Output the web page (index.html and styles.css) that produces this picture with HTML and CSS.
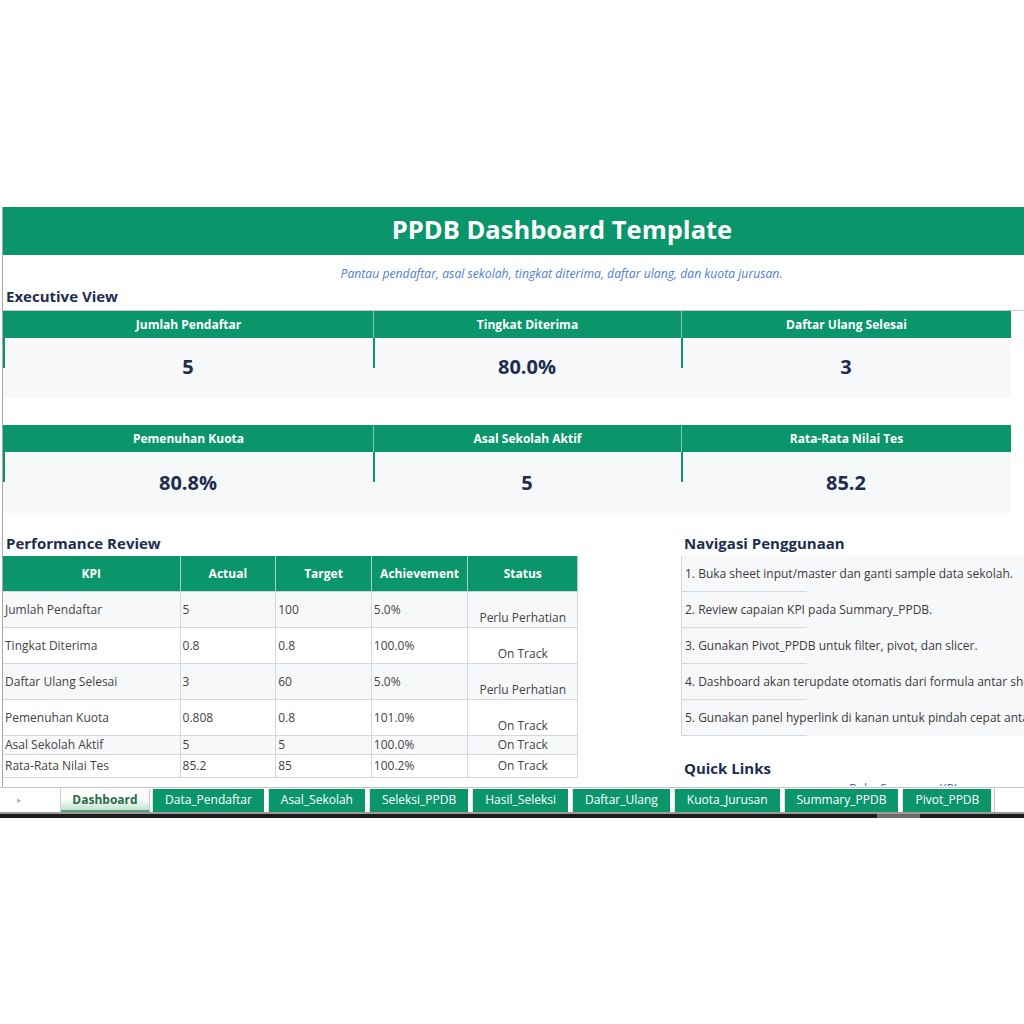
FILE: index.html
```html
<!DOCTYPE html>
<html lang="id">
<head>
    <meta charset="UTF-8">
    <title>PPDB Dashboard Template</title>
    <link rel="stylesheet" href="styles.css">
</head>
<body>

<div class="blank-top"></div>

<!-- Lembar Dashboard -->
<div class="sheet">
    <div class="banner">PPDB Dashboard Template</div>
    <div class="subtitle">Pantau pendaftar, asal sekolah, tingkat diterima, daftar ulang, dan kuota jurusan.</div>
    <div class="section-title exec">Executive View</div>

    <div class="kpi-grid">
        <div class="card"><div class="card-head">Jumlah Pendaftar</div><div class="card-value">5</div></div>
        <div class="card"><div class="card-head">Tingkat Diterima</div><div class="card-value">80.0%</div></div>
        <div class="card"><div class="card-head">Daftar Ulang Selesai</div><div class="card-value">3</div></div>
        <div class="card"><div class="card-head">Pemenuhan Kuota</div><div class="card-value">80.8%</div></div>
        <div class="card"><div class="card-head">Asal Sekolah Aktif</div><div class="card-value">5</div></div>
        <div class="card"><div class="card-head">Rata-Rata Nilai Tes</div><div class="card-value">85.2</div></div>
    </div>

    <div class="lower">
        <div class="col-left">
            <div class="section-title">Performance Review</div>
            <table class="perf">
                <thead>
                    <tr>
                        <th class="c-kpi">KPI</th>
                        <th class="c-num">Actual</th>
                        <th class="c-num">Target</th>
                        <th class="c-num">Achievement</th>
                        <th class="c-status">Status</th>
                    </tr>
                </thead>
                <tbody>
                    <tr class="tall"><td>Jumlah Pendaftar</td><td>5</td><td>100</td><td>5.0%</td><td class="status">Perlu Perhatian</td></tr>
                    <tr class="tall"><td>Tingkat Diterima</td><td>0.8</td><td>0.8</td><td>100.0%</td><td class="status">On Track</td></tr>
                    <tr class="tall"><td>Daftar Ulang Selesai</td><td>3</td><td>60</td><td>5.0%</td><td class="status">Perlu Perhatian</td></tr>
                    <tr class="tall"><td>Pemenuhan Kuota</td><td>0.808</td><td>0.8</td><td>101.0%</td><td class="status">On Track</td></tr>
                    <tr class="short"><td>Asal Sekolah Aktif</td><td>5</td><td>5</td><td>100.0%</td><td class="status">On Track</td></tr>
                    <tr class="short last"><td>Rata-Rata Nilai Tes</td><td>85.2</td><td>85</td><td>100.2%</td><td class="status">On Track</td></tr>
                </tbody>
            </table>
        </div>

        <div class="col-right">
            <div class="section-title">Navigasi Penggunaan</div>
            <ul class="nav-list">
                <li>1. Buka sheet input/master dan ganti sample data sekolah.</li>
                <li>2. Review capaian KPI pada Summary_PPDB.</li>
                <li>3. Gunakan Pivot_PPDB untuk filter, pivot, dan slicer.</li>
                <li>4. Dashboard akan terupdate otomatis dari formula antar sheet.</li>
                <li>5. Gunakan panel hyperlink di kanan untuk pindah cepat antar sheet.</li>
            </ul>
            <div class="section-title quick">Quick Links</div>
            <div class="quick-link">Buka Summary_KPI</div>
        </div>
    </div>
</div>

<!-- Tab sheet -->
<div class="tabbar">
    <div class="tab-nav">&#9656;</div>
    <div class="tab active">Dashboard</div>
    <div class="tab">Data_Pendaftar</div>
    <div class="tab">Asal_Sekolah</div>
    <div class="tab">Seleksi_PPDB</div>
    <div class="tab">Hasil_Seleksi</div>
    <div class="tab">Daftar_Ulang</div>
    <div class="tab">Kuota_Jurusan</div>
    <div class="tab">Summary_PPDB</div>
    <div class="tab">Pivot_PPDB</div>
    <div class="tab-end"></div>
</div>
<div class="bottom-bar"><div class="thumb"></div></div>

</body>
</html>
```

FILE: styles.css
```css
body {
    margin: 0;
    background-color: #ffffff;
    font-family: "Open Sans", "Noto Sans", sans-serif;
    color: #333333;
}
.blank-top {
    height: 207px;
}
.sheet {
    margin-left: 2px;
    border-left: 1px solid #a8a8a8;
    height: 580px;
    overflow: hidden;
}
.banner {
    height: 48px;
    line-height: 45px;
    background-color: #0a966a;
    color: #ffffff;
    font-size: 25.5px;
    font-weight: 700;
    text-align: center;
    padding-left: 97px;
}
.subtitle {
    height: 35px;
    line-height: 38px;
    text-align: center;
    font-size: 12.2px;
    font-style: italic;
    color: #4f80d0;
    padding-left: 96px;
}
.section-title {
    font-size: 15px;
    font-weight: 700;
    color: #1e2d4f;
    padding-left: 3px;
    height: 25px;
    line-height: 25px;
}
.section-title.exec {
    height: 20px;
    line-height: 13px;
    border-bottom: 1px solid #c9c9c9;
}
.kpi-grid {
    display: grid;
    grid-template-columns: 370px 308px 330px;
    row-gap: 27px;
}
.card-head {
    height: 27px;
    line-height: 27px;
    background-color: #0a966a;
    color: #ffffff;
    font-size: 12px;
    font-weight: 700;
    text-align: center;
    border-left: 1px solid #7fcaae;
}
.card:first-child .card-head,
.card:nth-child(4) .card-head {
    border-left-color: #0a966a;
}
.card-value {
    height: 60px;
    line-height: 58px;
    background: linear-gradient(#0a966a, #0a966a) left top / 2px 30px no-repeat, #f7f8fa;
    color: #1e2d4f;
    font-size: 20px;
    font-weight: 700;
    text-align: center;
}
.card:nth-child(n+4) .card-value {
    height: 61px;
    line-height: 61px;
}
.lower {
    display: grid;
    grid-template-columns: 678px 1fr;
    margin-top: 18px;
}
.perf {
    width: 575px;
    border-collapse: collapse;
    font-size: 12px;
}
.perf th {
    height: 35px;
    background-color: #0a966a;
    color: #ffffff;
    font-weight: 700;
    font-size: 12px;
    text-align: center;
    border-right: 1px solid #9fd6c1;
    padding: 0;
}
.c-kpi { width: 178px; }
.c-num { width: 96px; }
.c-status { width: 109px; }
.perf td {
    border: 1px solid #d3d7de;
    border-left: none;
    padding: 0 2px;
    color: #444444;
    white-space: nowrap;
    line-height: 16px;
}
.perf tbody tr:nth-child(odd) {
    background-color: #f7f8fa;
}
.perf tr.tall {
    height: 36px;
}
.perf tr.tall td {
    padding-bottom: 0;
}
.perf tr.short {
    height: 19px;
}
.perf tr.last {
    height: 23px;
}
.perf td.status {
    text-align: center;
}
.perf tr.tall td.status {
    vertical-align: bottom;
    padding-bottom: 1px;
}
.nav-list {
    list-style: none;
    margin: 0;
    padding: 0;
    border-left: 1px solid #d3d7de;
    background-color: #f7f8fa;
    font-size: 12px;
    color: #3a3a3a;
    white-space: nowrap;
    overflow: hidden;
}
.nav-list li {
    height: 36px;
    line-height: 35px;
    padding-left: 3px;
    background: linear-gradient(#d3d7de, #d3d7de) left bottom / 125px 1px no-repeat;
}
.section-title.quick {
    margin-top: 20px;
    height: 24px;
    line-height: 24px;
}
.quick-link {
    height: 6px;
    overflow: hidden;
    font-size: 12px;
    line-height: 18px;
    color: #3d6fc6;
    padding-left: 168px;
}
.tabbar {
    display: flex;
    align-items: stretch;
    height: 24px;
    border-top: 1px solid #c4c4c4;
    background-color: #ffffff;
}
.tab-nav {
    width: 61px;
    color: #b8b8b8;
    font-size: 9px;
    line-height: 24px;
    padding-left: 17px;
    box-sizing: border-box;
    border-right: 1px solid #d0d0d0;
}
.tab {
    margin-left: 4px;
    padding: 0 12px;
    line-height: 22px;
    margin-top: 1px;
    background-color: #0a966a;
    color: #ffffff;
    font-size: 12px;
    border-left: 1px solid #cfe9df;
}
.tab.active {
    margin-left: 0;
    background: linear-gradient(#ffffff, #ffffff 45%, #bfe3d2);
    color: #2a6a47;
    font-weight: 700;
    border-bottom: 2px solid #5a9f7e;
    border-left: none;
    border-right: 1px solid #c8c8c8;
    width: 88px;
    padding: 0;
    text-align: center;
}
.tab:nth-child(3) {
    margin-left: 2px;
}
.tab-end {
    width: 3px;
    border-right: 1px solid #c8c8c8;
}
.bottom-bar {
    height: 4px;
    border-top: 2px solid #9a9a9a;
    background-color: #1c1c1c;
    position: relative;
}
.bottom-bar .thumb {
    position: absolute;
    left: 877px;
    top: 0;
    width: 43px;
    height: 4px;
    background-color: #6c6c6c;
}
```
